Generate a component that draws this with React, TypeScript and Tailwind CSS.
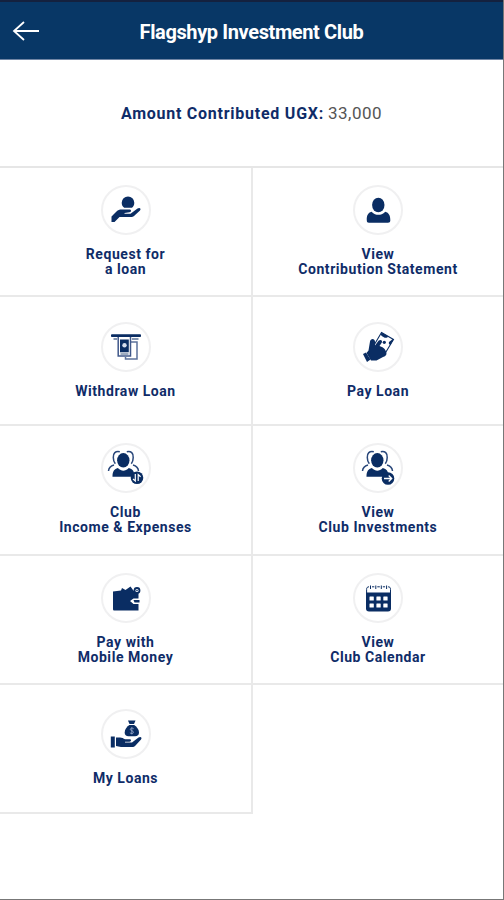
import { ReactNode } from "react";

const navy = "#0a2d63";

function RequestIcon() {
  return (
    <svg viewBox="0 0 50 50" fill={navy} className="size-full">
      <path d="M27 11.500a6.300 6.300 0 0 1 6.300 6.300c0 2.400-1 4-2.400 5H23.200c-1.600-1-2.500-2.800-2.500-5a6.300 6.300 0 0 1 6.300-6.300Z" />
      <path d="M10.500 37V31.500L15.500 26.500C17 25 18.500 24.500 20.500 24.500H28.500C30.500 24.500 30.500 27 28.500 27.300L23.500 28V28.700H29.500L36.500 23.500C38.500 22 40.500 23.500 39 25.500L33 31C32 31.800 31.300 32 30 32H18.500L13.500 37Z" />
    </svg>
  );
}

function UserIcon() {
  return (
    <svg viewBox="0 0 50 50" fill={navy} className="size-full">
      <ellipse cx="25.300" cy="20" rx="6.200" ry="7.300" />
      <path d="M18.500 26.700C21 29 23 29.800 25.300 29.800S30 29 32.300 26.700C35.800 27.700 37.500 30.500 37.300 35.500C37.200 37 36.500 37.700 35 37.700H16C14.500 37.700 13.800 37 13.800 35.500C13.500 30.500 15 27.700 18.500 26.700Z" />
    </svg>
  );
}

function WithdrawIcon() {
  return (
    <svg viewBox="0 0 50 50" fill="none" stroke={navy} className="size-full">
      <path d="M10.500 14.500V12.800H39.500V14.500Z" fill={navy} />
      <path d="M12.500 17H16M31 17H37.500" strokeWidth="1.200" />
      <path d="M30 20H36V37H24.500V35" strokeWidth="1.500" stroke="#5c719a" />
      <path d="M17.200 15V34H29.500V15" strokeWidth="1.500" stroke="#40588a" />
      <rect x="19" y="17.500" width="8.800" height="12.800" fill={navy} stroke="none" />
      <circle cx="23.500" cy="23.300" r="2.200" fill="#d5ddec" stroke="none" />
      <path d="M19.500 32H27.500" strokeWidth=".8" />
    </svg>
  );
}

function PayLoanIcon() {
  return (
    <svg viewBox="0 0 50 50" fill={navy} className="size-full">
      <path d="M28.500 10.500L40.500 17.500L32 31.500L20.500 24Z" fill="#fff" stroke={navy} strokeWidth="1.100" />
      <path d="M28.500 10.500L35 14.200C34.500 16.500 31 16.500 27.800 13Z" />
      <path d="M36 20C38 18.800 39 17.500 39.500 17L40.500 17.500L37.300 23C36 22.500 35.500 21.300 36 20Z" />
      <circle cx="31.300" cy="20.300" r="1.600" />
      <path d="M15.500 28.500L17 19.500C17.500 16 21.800 16 22 19.500V23.500L25.500 18.800C27.500 16.800 30 18.500 28.700 20.800L26.500 24L29.500 25.300C31.500 26.500 32.500 28 33.300 30.500C34 33 32 34.500 30 35L23.500 38.500H18L13.500 31Z" />
      <path d="M10 32L13 30.500L17.500 37.500L14 40Z" />
    </svg>
  );
}

function GroupShape() {
  return (
    <>
      <ellipse cx="24.300" cy="17.300" rx="6.200" ry="7.300" fill={navy} />
      <path d="M18.800 25C21 27 22.500 27.700 24.300 27.700S28 27 29.800 25C33.500 26 35.500 28 35.500 33.700H13.500C13.500 28 15.500 26 18.800 25Z" fill={navy} />
      <path d="M20.800 8.700C16.500 7.500 14 10.500 14.300 14.500C14.300 17.500 15.300 19.500 16.300 20.800M27.800 8.700C32 7.500 34.600 10.500 34.200 14.500C34.200 17.500 33.300 19.500 32.300 20.800M15 22C11.500 23 9.800 24.500 9.500 28M34 22C37.500 23 39.200 24.500 39.500 28" fill="none" stroke="#29477a" strokeWidth="1.500" />
    </>
  );
}

function IncomeIcon() {
  return (
    <svg viewBox="0 0 50 50" className="size-full">
      <g transform="translate(-2 0)">
        <GroupShape />
      </g>
      <circle cx="36" cy="34.700" r="6.300" fill={navy} />
      <path d="M34.300 31V38L32 36M37.200 38V31.500L39.600 33.700" fill="none" stroke="#fff" strokeWidth="1.200" />
    </svg>
  );
}

function InvestmentsIcon() {
  return (
    <svg viewBox="0 0 50 50" className="size-full">
      <GroupShape />
      <circle cx="35" cy="35.500" r="6.300" fill={navy} />
      <path d="M31 35.500H38.500M35.700 32.500L38.700 35.500L35.700 38.500" fill="none" stroke="#fff" strokeWidth="1.300" />
    </svg>
  );
}

function WalletIcon() {
  return (
    <svg viewBox="0 0 50 50" fill={navy} className="size-full">
      <path d="M12 18.500L20 17.500L21 15L24.500 17L29.500 13.500L32 17L34.500 19.500L37.500 20.500V25.500H32.500L29 28L32.500 31H37.500V37.500H13.500C12.500 37.500 12 37 12 36Z" />
      <path d="M32.500 27H38.500V29.500H33.500Z" />
      <circle cx="36" cy="17.500" r="2.500" fill="#fff" stroke={navy} strokeWidth="1.800" />
      <circle cx="36" cy="17.500" r=".8" />
    </svg>
  );
}

function CalendarIcon() {
  return (
    <svg viewBox="0 0 50 50" className="size-full">
      <path d="M13.600 22V16.500C13.600 14.500 14.500 13.800 16 13.800H35C36.800 13.800 37.500 14.500 37.500 16.500V22" fill="#fff" stroke={navy} strokeWidth="1" />
      <path d="M17.500 12.500V16M22.800 12.500V16M28.300 12.500V16M33.600 12.500V16" stroke="#fff" strokeWidth="3" />
      <path d="M17.500 12.500V16M22.800 12.500V16M28.300 12.500V16M33.600 12.500V16" stroke={navy} strokeWidth="1" />
      <path d="M13 19.500H38V35.500C38 37.500 37 38.500 35 38.500H16C14 38.500 13 37.500 13 35.500Z" fill={navy} />
      <g fill="#fff">
        <rect x="16.500" y="23.500" width="4.300" height="4" rx=".5" />
        <rect x="23.400" y="23.500" width="4.300" height="4" rx=".5" />
        <rect x="30.300" y="23.500" width="4.300" height="4" rx=".5" />
        <rect x="16.500" y="30.500" width="4.300" height="4" rx=".5" />
        <rect x="23.400" y="30.500" width="4.300" height="4" rx=".5" />
        <rect x="30.300" y="30.500" width="4.300" height="4" rx=".5" />
      </g>
    </svg>
  );
}

function MyLoansIcon() {
  return (
    <svg viewBox="0 0 50 50" fill={navy} className="size-full">
      <path d="M27 11.500H34.500L33 15H28.500Z" />
      <path d="M28.300 16H33.200C36 18 38 20.500 38 23.500C38 26 36.500 27.200 34 27.200H27.500C25 27.200 23.700 26 23.700 23.500C23.700 20.500 25.500 18 28.300 16Z" />
      <path d="M32.700 19.800C31.500 18.800 29.300 19 29.300 20.400C29.300 22 32.500 21.500 32.500 23.300C32.500 24.700 30 24.900 28.900 23.800M30.800 18.300V25.400" fill="none" stroke="#8ea2c5" strokeWidth=".9" />
      <path d="M9.800 27.500H13.800V38.500H9.800Z" />
      <path d="M15 28.500H19C21 28.500 22.500 29.500 24 30.300H28.500C30.500 30.300 30.500 32.500 28.500 32.700H24V33.500H31L37.500 28.500C39.500 27 41.500 28.500 40 30.500L34.500 36.500C33.500 37.500 32.500 38 31 38H20L15 37Z" />
    </svg>
  );
}

interface MenuItemProps {
  icon: ReactNode;
  lines: string[];
}

function MenuItem({ icon, lines }: MenuItemProps) {
  return (
    <button className="flex h-[129.200px] flex-col items-center justify-center gap-3 border-b-2 border-[#e9e9e9] pb-px odd:border-r-2">
      <span className="size-[50px] rounded-full border-2 border-[#f0f0f1] *:-m-0.5 *:size-[50px]">{icon}</span>
      <span className="flex flex-col items-center text-[14px] leading-[15px] font-bold tracking-[0.550px] text-[#0f2c68]">
        {lines.map((line) => (
          <span key={line}>{line}</span>
        ))}
      </span>
    </button>
  );
}

export default function App() {
  return (
    <div className="flex h-[900px] w-[504px] flex-col border-r border-b border-[#777] bg-white font-[Roboto,sans-serif]">
      <header className="grid h-[60px] grid-cols-[60px_1fr_60px] items-center border-t-2 border-b border-t-[#14213f] border-b-[#7186a5] bg-[#083766] text-white">
        <button className="pl-3">
          <svg viewBox="0 0 28 20" className="h-5 w-7" fill="none" stroke="currentColor" strokeWidth="1.800">
            <path d="M27 10H2M12 1L2 10L12 19" />
          </svg>
        </button>
        <h1 className="pt-0.5 text-center text-[20px] font-bold tracking-[-0.380px]">Flagshyp Investment Club</h1>
      </header>

      <div className="flex h-[108px] items-center justify-center gap-1 border-b-2 border-[#e6e6e6] pt-px text-[16px]">
        <strong className="tracking-[0.750px] text-[#0f2c68]">Amount Contributed UGX:</strong>
        <span className="text-[17px] tracking-[0.500px] text-[#555]">33,000</span>
      </div>

      <main className="grid grid-cols-[253px_1fr]">
        <MenuItem icon={<RequestIcon />} lines={["Request for", "a loan"]} />
        <MenuItem icon={<UserIcon />} lines={["View", "Contribution Statement"]} />
        <MenuItem icon={<WithdrawIcon />} lines={["Withdraw Loan"]} />
        <MenuItem icon={<PayLoanIcon />} lines={["Pay Loan"]} />
        <MenuItem icon={<IncomeIcon />} lines={["Club", "Income & Expenses"]} />
        <MenuItem icon={<InvestmentsIcon />} lines={["View", "Club Investments"]} />
        <MenuItem icon={<WalletIcon />} lines={["Pay with", "Mobile Money"]} />
        <MenuItem icon={<CalendarIcon />} lines={["View", "Club Calendar"]} />
        <MenuItem icon={<MyLoansIcon />} lines={["My Loans"]} />
      </main>
    </div>
  );
}
